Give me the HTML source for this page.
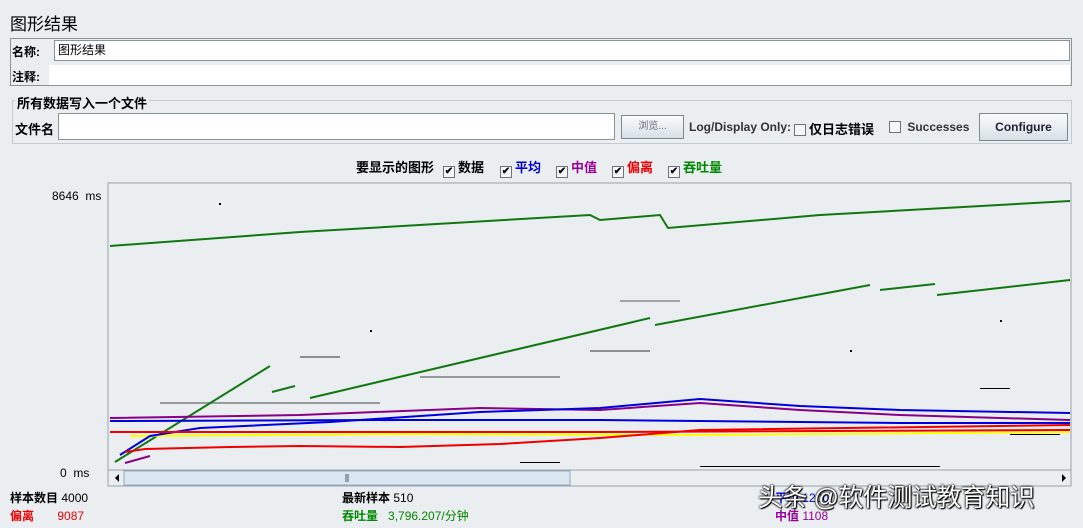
<!DOCTYPE html>
<html><head><meta charset="utf-8"><style>
*{margin:0;padding:0;box-sizing:border-box}
body{width:1083px;height:528px;background:#eaeef0;font-family:"Liberation Sans","Noto Sans CJK SC",sans-serif;font-size:12px;position:relative;overflow:hidden;color:#000}
.a{position:absolute;white-space:nowrap}
.b{font-weight:bold}
.in{position:absolute;background:#fff;border:1px solid #8a9498}
.cb{display:inline-block;width:12px;height:12px;border:1px solid #6c7478;background:#f4f6f8;vertical-align:-2px;font-size:10px;line-height:10px;text-align:center;margin-right:3px}
.btn{position:absolute;border:1px solid #7b8890;background:linear-gradient(#fafcfd,#d8e0e6);text-align:center}
.lg{position:absolute;top:157px;font-weight:bold;font-size:13px;white-space:nowrap}
</style></head><body>
<div class="a" style="left:10px;top:10px;font-size:17px">图形结果</div>
<div class="a" style="left:10px;top:38px;width:1062px;height:48px;border:1px solid #8a9498"></div>
<div class="a b" style="left:12px;top:43px">名称:</div>
<div class="in" style="left:54px;top:40px;width:1016px;height:21px;padding-left:3px;line-height:19px">图形结果</div>
<div class="a b" style="left:12px;top:68px">注释:</div>
<div class="a" style="left:49px;top:65px;width:1021px;height:20px;background:#fff"></div>
<div class="a" style="left:12px;top:100px;width:1060px;height:44px;border:1px solid #c4ccd0"></div>
<div class="a b" style="left:15px;top:93px;background:#eaeef0;padding:0 2px;font-size:13px">所有数据写入一个文件</div>
<div class="a b" style="left:15px;top:119px;font-size:13px">文件名</div>
<div class="in" style="left:58px;top:113px;width:557px;height:27px"></div>
<div class="btn" style="left:621px;top:115px;width:63px;height:24px;font-size:10px;color:#667;line-height:22px">浏览...</div>
<div class="a b" style="left:689px;top:120px;color:#333">Log/Display Only:</div>
<div class="a b" style="left:794px;top:119px;font-size:13px"><span class="cb"></span>仅日志错误</div>
<div class="a b" style="left:889px;top:120px;color:#333"><span class="cb"></span> Successes</div>
<div class="btn b" style="left:979px;top:113px;width:89px;height:28px;line-height:26px;color:#223">Configure</div>
<div class="lg" style="left:356px">要显示的图形</div>
<div class="lg" style="left:443px"><span class="cb">✔</span>数据</div>
<div class="lg" style="left:500px;color:#00c"><span class="cb" style="color:#000">✔</span>平均</div>
<div class="lg" style="left:556px;color:#909"><span class="cb" style="color:#000">✔</span>中值</div>
<div class="lg" style="left:612px;color:#e00"><span class="cb" style="color:#000">✔</span>偏离</div>
<div class="lg" style="left:668px;color:#080"><span class="cb" style="color:#000">✔</span>吞吐量</div>
<div class="a" style="left:52px;top:189px">8646 &nbsp;ms</div>
<div class="a" style="left:60px;top:466px">0 &nbsp;ms</div>
<svg class="a" style="left:107px;top:182px" width="966" height="306" viewBox="107 182 966 306">
<rect x="108" y="183" width="963" height="303" fill="#eaeef0" stroke="#9aa4a8"/>
<g fill="#000">
<rect x="160" y="402" width="220" height="2" opacity=".35"/>
<rect x="300" y="356" width="40" height="2" opacity=".4"/>
<rect x="420" y="376" width="140" height="2" opacity=".35"/>
<rect x="590" y="350" width="60" height="2" opacity=".4"/>
<rect x="620" y="300" width="60" height="2" opacity=".3"/>
<rect x="700" y="466" width="240" height="1"/>
<rect x="520" y="462" width="40" height="1"/>
<rect x="980" y="388" width="30" height="1"/>
<rect x="1010" y="434" width="50" height="1"/>
<rect x="219" y="203" width="2" height="2"/>
<rect x="370" y="330" width="2" height="2"/>
<rect x="850" y="350" width="2" height="2"/>
<rect x="1000" y="320" width="2" height="2"/>
</g>
<g fill="none" stroke-width="2">
<polyline stroke="#117711" points="110,246 300,232 590,215 600,220 660,215 668,228 820,215 1070,201"/>
<polyline stroke="#117711" points="115,462 270,366"/>
<polyline stroke="#117711" points="272,392 295,386"/>
<polyline stroke="#117711" points="310,398 650,318"/>
<polyline stroke="#117711" points="655,325 870,285"/>
<polyline stroke="#117711" points="880,290 935,284"/>
<polyline stroke="#117711" points="937,295 1070,280"/>
<polyline stroke="#ffff00" points="130,436 400,434 700,435 1070,432"/>
<polyline stroke="#880088" points="110,418 300,415 480,408 600,410 700,403 800,410 900,415 1070,420"/>
<polyline stroke="#0000dd" points="110,421 400,420 600,420 900,423 1070,423"/>
<polyline stroke="#0000dd" points="120,455 150,436 200,428 330,422 480,412 600,408 700,399 800,406 900,410 1070,413"/>
<polyline stroke="#ee0000" points="110,432 600,432 1070,430"/>
<polyline stroke="#ee0000" points="125,452 145,449 230,447 300,446 400,447 500,444 600,438 700,430 1070,425"/>
<polyline stroke="#880088" points="125,463 150,456"/>
</g>
<rect x="108" y="470" width="963" height="16" fill="#eaeef0" stroke="#9aa4a8"/>
<rect x="124" y="471" width="446" height="14" fill="#dbe6f0" stroke="#90a8c0"/>
<path d="M115 478l4-4v8z M1066 478l-4-4v8z" fill="#000"/>
<path d="M346 474v8M348 474v8" stroke="#556"/>
</svg>
<div class="a" style="left:10px;top:489px"><b>样本数目</b> 4000</div>
<div class="a" style="left:10px;top:507px;color:#e00"><b>偏离</b> &nbsp;&nbsp;&nbsp;&nbsp;&nbsp;&nbsp;9087</div>
<div class="a" style="left:342px;top:489px"><b>最新样本</b> 510</div>
<div class="a" style="left:342px;top:507px;color:#080"><b>吞吐量</b> &nbsp;&nbsp;3,796.207/分钟</div>
<div class="a" style="left:775px;top:489px;color:#00c"><b>平均</b> 1200</div>
<div class="a" style="left:775px;top:507px;color:#909"><b>中值</b> 1108</div>
<div class="a" style="left:758px;top:478px;font-size:25px;letter-spacing:-0.5px;color:#fff;text-shadow:0 0 2px #000,0 0 2px #000,1px 1px 1px #000">头条 @软件测试教育知识</div>
</body></html>
